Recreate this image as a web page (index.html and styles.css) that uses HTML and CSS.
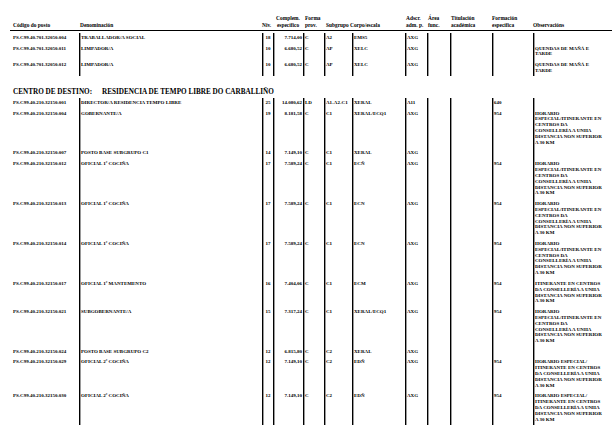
FILE: index.html
```html
<!DOCTYPE html>
<html lang="gl">
<head>
<meta charset="utf-8">
<title>Relación de postos</title>
<link rel="stylesheet" href="styles.css">
</head>
<body>
<div class="page">
  <div class="head">
    <div class="pl3">Código do posto</div>
    <div class="pl1">Denominación</div>
    <div>Niv.</div>
    <div class="center">Complem.<br>específico</div>
    <div class="pl2">Forma<br>prov.</div>
    <div class="pl2">Subgrupo</div>
    <div class="pl1">Corpo/escala</div>
    <div class="pl1">Adscr.<br>adm. p.</div>
    <div class="pl1">Área<br>func.</div>
    <div class="pl1">Titulación<br>académica</div>
    <div class="pl1">Formación<br>específica</div>
    <div class="pl1">Observacións</div>
  </div>

  <div class="grid first">
    <div class="row">
      <div>PS.C99.40.701.32050.004</div><div>TRABALLADOR/A SOCIAL</div><div class="num">18</div><div class="amt">7.714,00</div><div>C</div><div>A2</div><div>EMS5</div><div>AXG</div><div></div><div></div><div></div><div></div>
    </div>
    <div class="row">
      <div>PS.C99.40.701.32050.011</div><div>LIMPADOR/A</div><div class="num">10</div><div class="amt">6.680,52</div><div>C</div><div>AP</div><div>XELC</div><div>AXG</div><div></div><div></div><div></div><div>QUENDAS DE MAÑÁ E<br>TARDE</div>
    </div>
    <div class="row">
      <div>PS.C99.40.701.32050.012</div><div>LIMPADOR/A</div><div class="num">10</div><div class="amt">6.680,52</div><div>C</div><div>AP</div><div>XELC</div><div>AXG</div><div></div><div></div><div></div><div>QUENDAS DE MAÑÁ E<br>TARDE</div>
    </div>
  </div>

  <h2 class="dest"><span class="dest-label">CENTRO DE DESTINO:</span><span>RESIDENCIA DE TEMPO LIBRE DO CARBALLIÑO</span></h2>

  <div class="grid">
    <div class="row">
      <div>PS.C99.40.210.32150.001</div><div>DIRECTOR/A RESIDENCIA TEMPO LIBRE</div><div class="num">25</div><div class="amt">14.080,62</div><div>LD</div><div>A1-A2-C1</div><div>XERAL</div><div>A11</div><div></div><div></div><div>640</div><div></div>
    </div>
    <div class="row">
      <div>PS.C99.40.210.32150.004</div><div>GOBERNANTE/A</div><div class="num">19</div><div class="amt">8.181,58</div><div>C</div><div>C1</div><div>XERAL/ECQ1</div><div>AXG</div><div></div><div></div><div>954</div><div>HORARIO<br>ESPECIAL/ITINERANTE EN<br>CENTROS DA<br>CONSELLERÍA A UNHA<br>DISTANCIA NON SUPERIOR<br>A 30 KM</div>
    </div>
    <div class="row">
      <div>PS.C99.40.210.32150.007</div><div>POSTO BASE SUBGRUPO C1</div><div class="num">14</div><div class="amt">7.149,10</div><div>C</div><div>C1</div><div>XERAL</div><div>AXG</div><div></div><div></div><div></div><div></div>
    </div>
    <div class="row">
      <div>PS.C99.40.210.32150.012</div><div>OFICIAL 1ª COCIÑA</div><div class="num">17</div><div class="amt">7.589,24</div><div>C</div><div>C1</div><div>ECÑ</div><div>AXG</div><div></div><div></div><div>954</div><div>HORARIO<br>ESPECIAL/ITINERANTE EN<br>CENTROS DA<br>CONSELLERÍA A UNHA<br>DISTANCIA NON SUPERIOR<br>A 30 KM</div>
    </div>
    <div class="row">
      <div>PS.C99.40.210.32150.013</div><div>OFICIAL 1ª COCIÑA</div><div class="num">17</div><div class="amt">7.589,24</div><div>C</div><div>C1</div><div>ECN</div><div>AXG</div><div></div><div></div><div>954</div><div>HORARIO<br>ESPECIAL/ITINERANTE EN<br>CENTROS DA<br>CONSELLERÍA A UNHA<br>DISTANCIA NON SUPERIOR<br>A 30 KM</div>
    </div>
    <div class="row">
      <div>PS.C99.40.210.32150.014</div><div>OFICIAL 1ª COCIÑA</div><div class="num">17</div><div class="amt">7.589,24</div><div>C</div><div>C1</div><div>ECN</div><div>AXG</div><div></div><div></div><div>954</div><div>HORARIO<br>ESPECIAL/ITINERANTE EN<br>CENTROS DA<br>CONSELLERÍA A UNHA<br>DISTANCIA NON SUPERIOR<br>A 30 KM</div>
    </div>
    <div class="row">
      <div>PS.C99.40.210.32150.017</div><div>OFICIAL 1ª MANTEMENTO</div><div class="num">16</div><div class="amt">7.404,06</div><div>C</div><div>C1</div><div>ECM</div><div>AXG</div><div></div><div></div><div>954</div><div>ITINERANTE EN CENTROS<br>DA CONSELLERÍA A UNHA<br>DISTANCIA NON SUPERIOR<br>A 30 KM</div>
    </div>
    <div class="row">
      <div>PS.C99.40.210.32150.021</div><div>SUBGOBERNANTE/A</div><div class="num">15</div><div class="amt">7.317,24</div><div>C</div><div>C1</div><div>XERAL/ECQ1</div><div>AXG</div><div></div><div></div><div>954</div><div>HORARIO<br>ESPECIAL/ITINERANTE EN<br>CENTROS DA<br>CONSELLERÍA A UNHA<br>DISTANCIA NON SUPERIOR<br>A 30 KM</div>
    </div>
    <div class="row">
      <div>PS.C99.40.210.32150.024</div><div>POSTO BASE SUBGRUPO C2</div><div class="num">12</div><div class="amt">6.815,80</div><div>C</div><div>C2</div><div>XERAL</div><div>AXG</div><div></div><div></div><div></div><div></div>
    </div>
    <div class="row">
      <div>PS.C99.40.210.32150.029</div><div>OFICIAL 2ª COCIÑA</div><div class="num">12</div><div class="amt">7.149,10</div><div>C</div><div>C2</div><div>EDÑ</div><div>AXG</div><div></div><div></div><div>954</div><div>HORARIO ESPECIAL/<br>ITINERANTE EN CENTROS<br>DA CONSELLERÍA A UNHA<br>DISTANCIA NON SUPERIOR<br>A 30 KM</div>
    </div>
    <div class="row">
      <div>PS.C99.40.210.32150.030</div><div>OFICIAL 2ª COCIÑA</div><div class="num">12</div><div class="amt">7.149,10</div><div>C</div><div>C2</div><div>EDÑ</div><div>AXG</div><div></div><div></div><div>954</div><div>HORARIO ESPECIAL/<br>ITINERANTE EN CENTROS<br>DA CONSELLERÍA A UNHA<br>DISTANCIA NON SUPERIOR<br>A 30 KM</div>
    </div>
  </div>
</div>
</body>
</html>
```

FILE: styles.css
```css
html, body {
  margin: 0;
  padding: 0;
  background: #ffffff;
  color: #000000;
}

body {
  font-family: "Liberation Serif", "Times New Roman", serif;
  font-weight: bold;
}

.page {
  width: 602px;
  padding: 15px 3px 0 10px;
}

/* ---------- header row ---------- */
.head {
  display: grid;
  grid-template-columns: 69px 183px 11px 30px 21px 25px 56px 22px 23px 41px 41px 80px;
  align-items: end;
  border-bottom: 1px solid #000;
  font-size: 5.4px;
  line-height: 6.8px;
}

.head > div {
  padding-bottom: 1.5px;
  white-space: nowrap;
}

.head .pl1 { padding-left: 1px; }
.head .pl2 { padding-left: 2px; }
.head .pl3 { padding-left: 3px; }
.head .center { text-align: center; }

/* ---------- data grids ---------- */
.grid {
  display: flex;
  flex-direction: column;
  font-size: 5px;
  line-height: 5.9px;
}

.grid.first {
  margin-top: 2px;
}

.row {
  display: grid;
  grid-template-columns: 69px 183px 11px 30px 21px 28px 53px 22px 23px 42px 41px 79px;
}

.row > div {
  padding: 2px 1px 2.5px 2px;
  white-space: nowrap;
  box-shadow: inset 1px 0 0 #000, inset 2px 0 0 #9a9a9a;
}

.row > div:first-child {
  padding-left: 3px;
  box-shadow: none;
}

.row > .num {
  text-align: center;
  padding-left: 1px;
  padding-right: 0;
}

.row > .amt {
  text-align: right;
  padding-right: 1px;
}

/* ---------- destination heading ---------- */
.dest {
  margin: 0;
  padding: 10.5px 0 1.5px 3px;
  font-size: 7.2px;
  line-height: 10px;
  font-weight: bold;
  white-space: nowrap;
}

.dest-label {
  margin-right: 10px;
}
```
